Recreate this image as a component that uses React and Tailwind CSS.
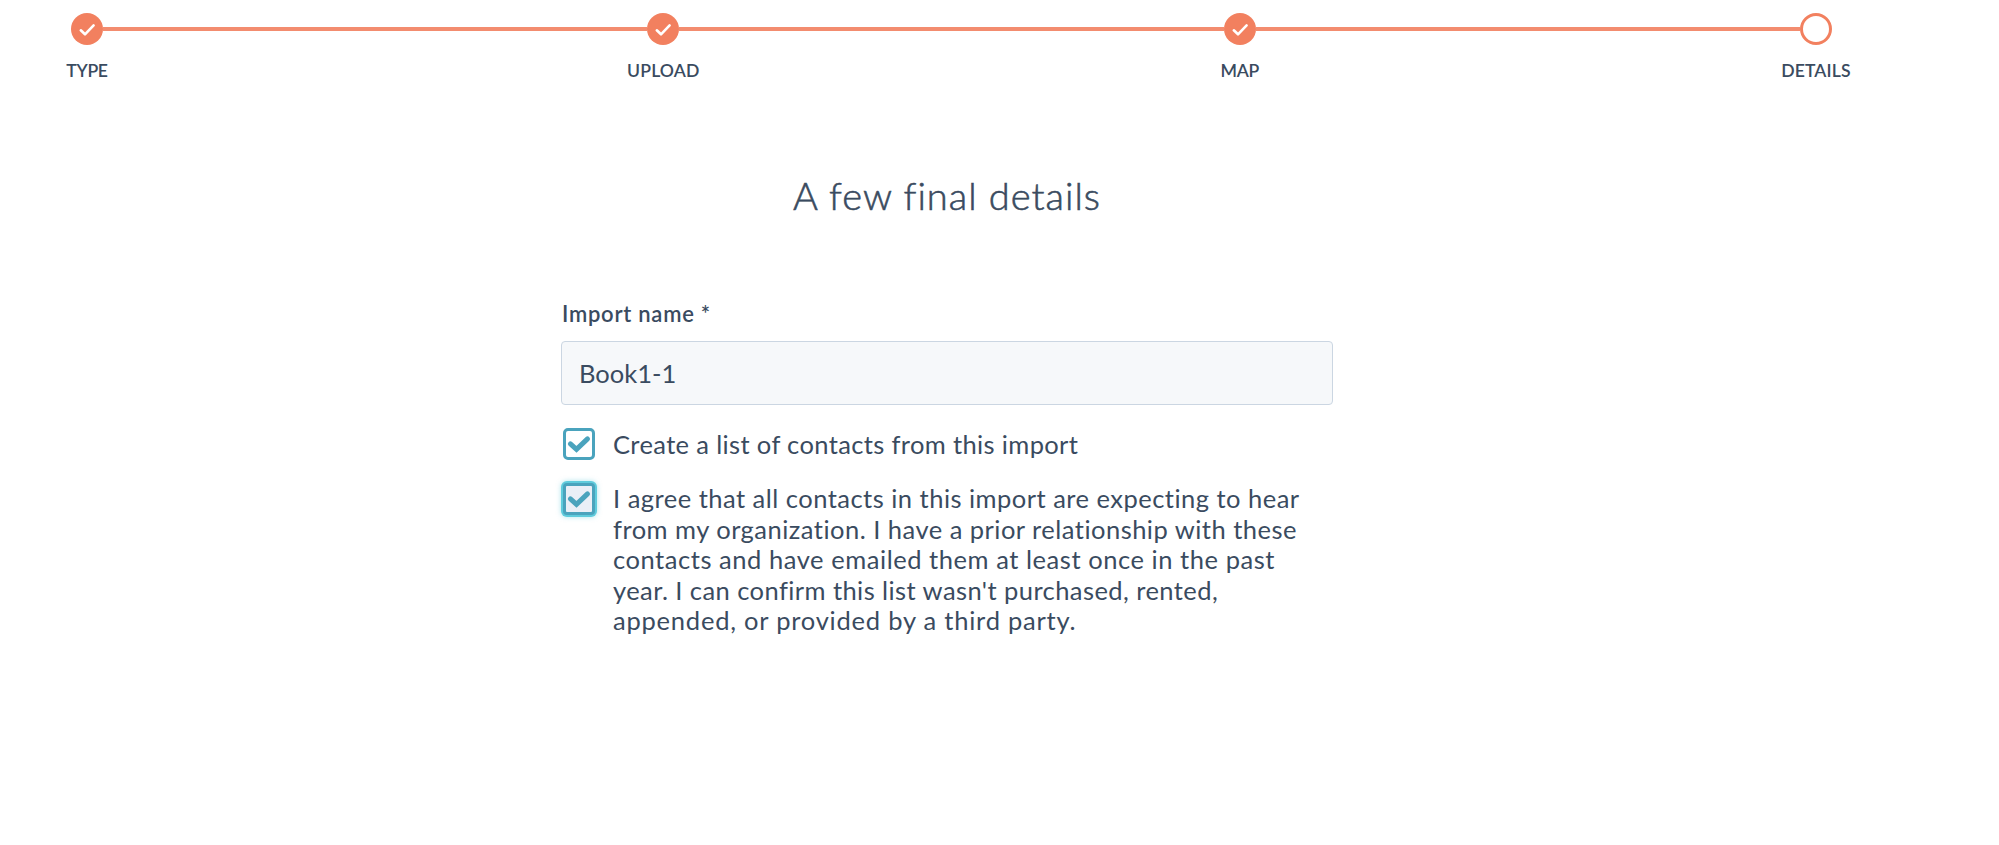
import React from 'react';

const steps = [
  { label: 'TYPE', done: true, spacing: 'tracking-[-0.3px]' },
  { label: 'UPLOAD', done: true, spacing: 'tracking-[0.15px]' },
  { label: 'MAP', done: true, spacing: 'tracking-[-0.3px]' },
  { label: 'DETAILS', done: false, spacing: 'tracking-[0.15px]' },
];

const consentLines = [
  { text: 'I agree that all contacts in this import are expecting to hear', spacing: 'tracking-[0.48px]' },
  { text: 'from my organization. I have a prior relationship with these', spacing: 'tracking-[0.48px]' },
  { text: 'contacts and have emailed them at least once in the past', spacing: 'tracking-[0.55px]' },
  { text: "year. I can confirm this list wasn't purchased, rented,", spacing: 'tracking-[0.43px]' },
  { text: 'appended, or provided by a third party.', spacing: 'tracking-[0.78px]' },
];

function Step({ label, done, spacing }) {
  return (
    <div className="flex w-8 flex-col items-center">
      {done ? (
        <div className="flex size-8 items-center justify-center rounded-full bg-[#f2805f]">
          <svg viewBox="0 0 32 32" className="size-8" fill="none" stroke="#fff" strokeWidth="2.6" strokeLinecap="round" strokeLinejoin="round">
            <path d="M9.8 17.3 L14 21.3 L22.6 12.4" />
          </svg>
        </div>
      ) : (
        <div className="size-8 rounded-full border-[3px] border-[#f2805f] bg-white" />
      )}
      <div className={`mt-[15px] text-[17.6px] leading-[22px] font-semibold whitespace-nowrap ${spacing}`}>{label}</div>
    </div>
  );
}

function Connector() {
  return <div className="mt-[14px] h-[4px] flex-1 bg-[#f2805f]/90" />;
}

function Checkbox({ focused }) {
  return (
    <div
      className={
        focused
          ? 'flex size-8 shrink-0 items-center justify-center rounded-[4px] border-[3.5px] border-[#4aa3bd] bg-[#eaeff7] shadow-[0_0_0_2px_#5fcbdc,0_0_5px_2px_rgba(95,203,220,0.5)]'
          : 'flex size-8 shrink-0 items-center justify-center rounded-[5px] border-[3px] border-[#4aa3bd] bg-white'
      }
    >
      <svg viewBox="0 0 26 26" className="size-[26px] shrink-0" fill="none" stroke="#4aa3bd" strokeWidth="5" strokeLinecap="round" strokeLinejoin="miter">
        <path d="M4.4 12.9 L10.5 18.4 L21.5 7.9" />
      </svg>
    </div>
  );
}

export default function App() {
  return (
    <div className="h-[845px] w-full overflow-hidden bg-white font-['Lato','Open_Sans',sans-serif] text-[#3a4b60]">
      <div className="flex w-[1832px] items-start pt-[13px] pl-[71px]">
        {steps.map((step, i) => (
          <React.Fragment key={step.label}>
            {i > 0 && <Connector />}
            <Step {...step} />
          </React.Fragment>
        ))}
      </div>

      <main className="ml-[561px] flex w-[772px] flex-col">
        <h1 className="mt-[90px] text-center text-[38px] leading-[46px] font-light tracking-[1px] [-webkit-text-stroke:0.6px_#3a4b60]">
          A few final details
        </h1>
        <label className="mt-[82px] pl-px text-[22px] leading-[28px] font-semibold tracking-[0.74px]">Import name *</label>
        <div className="mt-[13px] flex h-16 items-center rounded-[4px] border-[1.5px] border-[#cbd6e2] bg-[#f6f8fa] pl-[17px] text-[25.5px] leading-[30px]">
          Book1-1
        </div>
        <div className="mt-[23px] flex pl-[2px]">
          <Checkbox />
          <div className="ml-[18px] text-[25.5px] leading-[32px] tracking-[0.36px] whitespace-nowrap">
            Create a list of contacts from this import
          </div>
        </div>
        <div className="mt-[23px] flex pl-[2px]">
          <Checkbox focused />
          <div className="ml-[18px] text-[25.5px] leading-[30.6px]">
            {consentLines.map((line) => (
              <div key={line.text} className={`whitespace-nowrap ${line.spacing}`}>{line.text}</div>
            ))}
          </div>
        </div>
      </main>
    </div>
  );
}
